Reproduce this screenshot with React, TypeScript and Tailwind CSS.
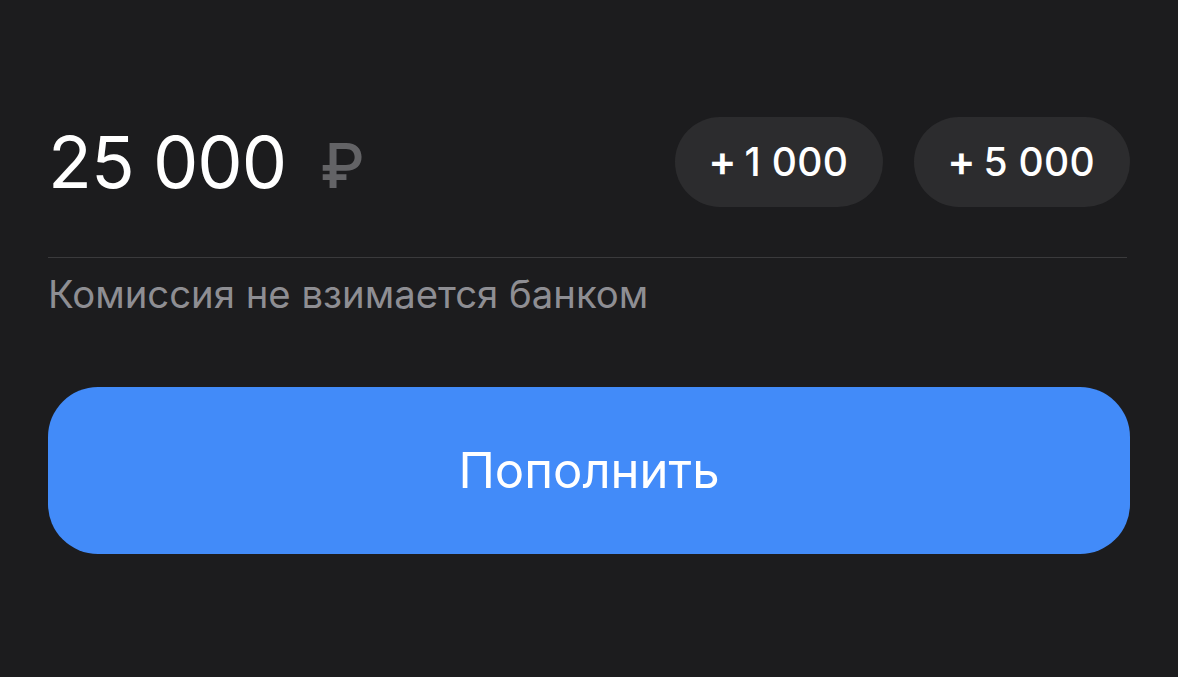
const chips = ['1 000', '5 000'];

export default function App() {
  return (
    <div
      className="min-h-screen w-full bg-[#1c1c1e] px-12 pt-[117px]"
      style={{ fontFamily: 'Inter, "Noto Sans", sans-serif' }}
    >
      {/* amount row */}
      <div className="flex items-center justify-between">
        <div className="flex items-baseline gap-[34px]">
          <span className="text-[72px] leading-none font-normal tracking-[-1px] text-white">25 000</span>
          <span className="text-[62px] leading-none font-medium text-[#636366]">₽</span>
        </div>
        <div className="flex gap-[31px]">
          {chips.map((c) => (
            <button
              key={c}
              className="flex h-[90px] items-center gap-[8px] rounded-full bg-[#2c2c2e] pl-[33px] pr-[35px] text-[39px] font-medium text-white"
            >
              <span className="text-[42px] font-semibold leading-none -mt-[3px]">+</span>
              <span className="tracking-[0.3px]">{c}</span>
            </button>
          ))}
        </div>
      </div>

      <div className="mt-[50px] mr-[3px] h-px bg-[#3a3a3c]" />

      <p className="mt-[12px] text-[38.3px] leading-[48px] text-[#8e8e93]">Комиссия не взимается банком</p>

      <button className="mt-[69px] flex h-[167px] w-full items-center justify-center rounded-[50px] bg-[#428bf9] text-[49px] text-white">
        Пополнить
      </button>
    </div>
  );
}
